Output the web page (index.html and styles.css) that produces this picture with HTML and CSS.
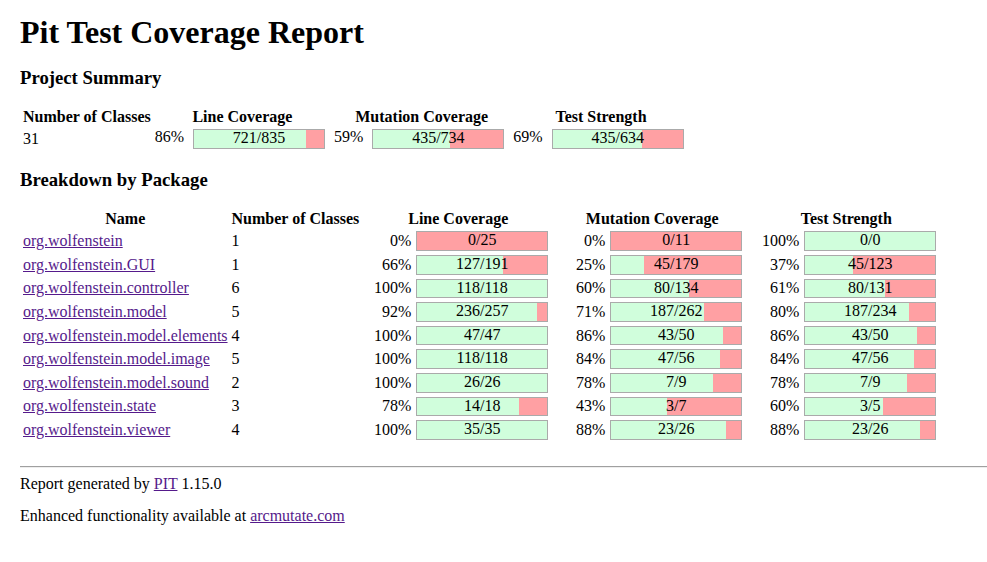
FILE: index.html
```html
<!DOCTYPE html>
<html>
<head>
<meta charset="utf-8">
<title>Pit Test Coverage Report</title>
<link rel="stylesheet" href="styles.css">
</head>
<body>
<h1 class="title">Pit Test Coverage Report</h1>

<h3 class="section">Project Summary</h3>
<table class="report">
  <thead>
    <tr>
      <th>Number of Classes</th>
      <th>Line Coverage</th>
      <th>Mutation Coverage</th>
      <th>Test Strength</th>
    </tr>
  </thead>
  <tbody>
    <tr>
      <td>31</td>
      <td>86% <div class="coverage_bar"><div class="coverage_complete" style="width:86%"></div><div class="coverage_legend">721/835</div></div></td>
      <td>59% <div class="coverage_bar"><div class="coverage_complete" style="width:59%"></div><div class="coverage_legend">435/734</div></div></td>
      <td>69% <div class="coverage_bar"><div class="coverage_complete" style="width:69%"></div><div class="coverage_legend">435/634</div></div></td>
    </tr>
  </tbody>
</table>

<h3 class="section section-second">Breakdown by Package</h3>
<table class="report">
  <thead>
    <tr>
      <th>Name</th>
      <th>Number of Classes</th>
      <th>Line Coverage</th>
      <th>Mutation Coverage</th>
      <th>Test Strength</th>
    </tr>
  </thead>
  <tbody>
    <tr>
      <td><a class="pkg" href="#">org.wolfenstein</a></td>
      <td>1</td>
      <td><div class="coverage_percentage">0%</div><div class="coverage_bar"><div class="coverage_complete" style="width:0%"></div><div class="coverage_legend">0/25</div></div></td>
      <td><div class="coverage_percentage">0%</div><div class="coverage_bar"><div class="coverage_complete" style="width:0%"></div><div class="coverage_legend">0/11</div></div></td>
      <td><div class="coverage_percentage">100%</div><div class="coverage_bar"><div class="coverage_complete" style="width:100%"></div><div class="coverage_legend">0/0</div></div></td>
    </tr>
    <tr>
      <td><a class="pkg" href="#">org.wolfenstein.GUI</a></td>
      <td>1</td>
      <td><div class="coverage_percentage">66%</div><div class="coverage_bar"><div class="coverage_complete" style="width:66%"></div><div class="coverage_legend">127/191</div></div></td>
      <td><div class="coverage_percentage">25%</div><div class="coverage_bar"><div class="coverage_complete" style="width:25%"></div><div class="coverage_legend">45/179</div></div></td>
      <td><div class="coverage_percentage">37%</div><div class="coverage_bar"><div class="coverage_complete" style="width:37%"></div><div class="coverage_legend">45/123</div></div></td>
    </tr>
    <tr>
      <td><a class="pkg" href="#">org.wolfenstein.controller</a></td>
      <td>6</td>
      <td><div class="coverage_percentage">100%</div><div class="coverage_bar"><div class="coverage_complete" style="width:100%"></div><div class="coverage_legend">118/118</div></div></td>
      <td><div class="coverage_percentage">60%</div><div class="coverage_bar"><div class="coverage_complete" style="width:60%"></div><div class="coverage_legend">80/134</div></div></td>
      <td><div class="coverage_percentage">61%</div><div class="coverage_bar"><div class="coverage_complete" style="width:61%"></div><div class="coverage_legend">80/131</div></div></td>
    </tr>
    <tr>
      <td><a class="pkg" href="#">org.wolfenstein.model</a></td>
      <td>5</td>
      <td><div class="coverage_percentage">92%</div><div class="coverage_bar"><div class="coverage_complete" style="width:92%"></div><div class="coverage_legend">236/257</div></div></td>
      <td><div class="coverage_percentage">71%</div><div class="coverage_bar"><div class="coverage_complete" style="width:71%"></div><div class="coverage_legend">187/262</div></div></td>
      <td><div class="coverage_percentage">80%</div><div class="coverage_bar"><div class="coverage_complete" style="width:80%"></div><div class="coverage_legend">187/234</div></div></td>
    </tr>
    <tr>
      <td><a class="pkg" href="#">org.wolfenstein.model.elements</a></td>
      <td>4</td>
      <td><div class="coverage_percentage">100%</div><div class="coverage_bar"><div class="coverage_complete" style="width:100%"></div><div class="coverage_legend">47/47</div></div></td>
      <td><div class="coverage_percentage">86%</div><div class="coverage_bar"><div class="coverage_complete" style="width:86%"></div><div class="coverage_legend">43/50</div></div></td>
      <td><div class="coverage_percentage">86%</div><div class="coverage_bar"><div class="coverage_complete" style="width:86%"></div><div class="coverage_legend">43/50</div></div></td>
    </tr>
    <tr>
      <td><a class="pkg" href="#">org.wolfenstein.model.image</a></td>
      <td>5</td>
      <td><div class="coverage_percentage">100%</div><div class="coverage_bar"><div class="coverage_complete" style="width:100%"></div><div class="coverage_legend">118/118</div></div></td>
      <td><div class="coverage_percentage">84%</div><div class="coverage_bar"><div class="coverage_complete" style="width:84%"></div><div class="coverage_legend">47/56</div></div></td>
      <td><div class="coverage_percentage">84%</div><div class="coverage_bar"><div class="coverage_complete" style="width:84%"></div><div class="coverage_legend">47/56</div></div></td>
    </tr>
    <tr>
      <td><a class="pkg" href="#">org.wolfenstein.model.sound</a></td>
      <td>2</td>
      <td><div class="coverage_percentage">100%</div><div class="coverage_bar"><div class="coverage_complete" style="width:100%"></div><div class="coverage_legend">26/26</div></div></td>
      <td><div class="coverage_percentage">78%</div><div class="coverage_bar"><div class="coverage_complete" style="width:78%"></div><div class="coverage_legend">7/9</div></div></td>
      <td><div class="coverage_percentage">78%</div><div class="coverage_bar"><div class="coverage_complete" style="width:78%"></div><div class="coverage_legend">7/9</div></div></td>
    </tr>
    <tr>
      <td><a class="pkg" href="#">org.wolfenstein.state</a></td>
      <td>3</td>
      <td><div class="coverage_percentage">78%</div><div class="coverage_bar"><div class="coverage_complete" style="width:78%"></div><div class="coverage_legend">14/18</div></div></td>
      <td><div class="coverage_percentage">43%</div><div class="coverage_bar"><div class="coverage_complete" style="width:43%"></div><div class="coverage_legend">3/7</div></div></td>
      <td><div class="coverage_percentage">60%</div><div class="coverage_bar"><div class="coverage_complete" style="width:60%"></div><div class="coverage_legend">3/5</div></div></td>
    </tr>
    <tr>
      <td><a class="pkg" href="#">org.wolfenstein.viewer</a></td>
      <td>4</td>
      <td><div class="coverage_percentage">100%</div><div class="coverage_bar"><div class="coverage_complete" style="width:100%"></div><div class="coverage_legend">35/35</div></div></td>
      <td><div class="coverage_percentage">88%</div><div class="coverage_bar"><div class="coverage_complete" style="width:88%"></div><div class="coverage_legend">23/26</div></div></td>
      <td><div class="coverage_percentage">88%</div><div class="coverage_bar"><div class="coverage_complete" style="width:88%"></div><div class="coverage_legend">23/26</div></div></td>
    </tr>
  </tbody>
</table>

<hr class="rule">

<p class="footer">Report generated by <a class="pkg" href="#">PIT</a> 1.15.0</p>
<p class="footer">Enhanced functionality available at <a class="pkg" href="#">arcmutate.com</a></p>
</body>
</html>
```

FILE: styles.css
```css
html {
  margin: 0;
  padding: 0;
}

body {
  margin: 0 0 0 20px;
  padding: 0;
  line-height: 1;
  color: black;
  background: white;
  font-family: "Liberation Serif", "Times New Roman", serif;
  font-size: 16px;
}

.title {
  font-size: 32px;
  font-weight: bold;
  margin: 16px 0 20.5px;
}

.section {
  font-size: 18.72px;
  font-weight: bold;
  margin: 18.72px 0;
}

.section-second {
  margin-top: 19.5px;
}

.report {
  border-spacing: 2px;
  border-collapse: separate;
}

.report th,
.report td {
  padding: 1px;
}

.report th {
  font-weight: bold;
  text-align: center;
}

.report td {
  text-align: left;
  vertical-align: middle;
}

.pkg {
  color: #551a8b;
  text-decoration: underline;
}

.coverage_percentage {
  display: inline-block;
  width: 48px;
  text-align: right;
  vertical-align: middle;
}

.coverage_bar {
  display: inline-block;
  height: 1.1em;
  width: 130px;
  background: #ffa0a3;
  margin: 0 5px;
  vertical-align: middle;
  border: 1px solid #aaa;
  position: relative;
  text-align: left;
}

.coverage_complete {
  display: inline-block;
  height: 100%;
  background: #d0fedc;
  float: left;
}

.coverage_legend {
  position: absolute;
  height: 100%;
  width: 100%;
  left: 0;
  top: 0;
  text-align: center;
}

.rule {
  margin: 23px 0 8px;
  border: 0;
  border-top: 1px solid #a0a0a0;
  border-bottom: 1px solid #eeeeee;
  height: 0;
}

.footer {
  margin: 0 0 16px;
}
```
